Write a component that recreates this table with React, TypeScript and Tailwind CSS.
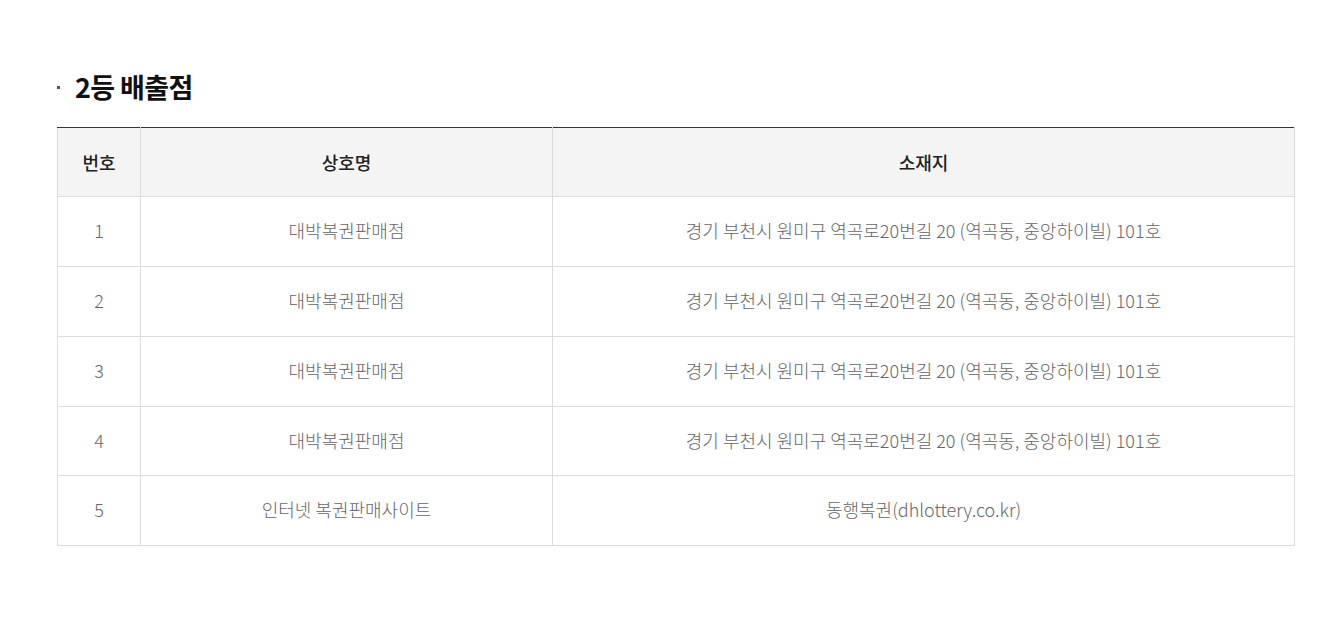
import React from "react";

const rows = [
  { n: "1", name: "대박복권판매점", addr: "경기 부천시 원미구 역곡로20번길 20 (역곡동, 중앙하이빌) 101호" },
  { n: "2", name: "대박복권판매점", addr: "경기 부천시 원미구 역곡로20번길 20 (역곡동, 중앙하이빌) 101호" },
  { n: "3", name: "대박복권판매점", addr: "경기 부천시 원미구 역곡로20번길 20 (역곡동, 중앙하이빌) 101호" },
  { n: "4", name: "대박복권판매점", addr: "경기 부천시 원미구 역곡로20번길 20 (역곡동, 중앙하이빌) 101호" },
  { n: "5", name: "인터넷 복권판매사이트", addr: "동행복권(dhlottery.co.kr)" },
];

export default function App() {
  return (
    <div
      className="w-[1336px] h-[621px] bg-white pt-[67px] pl-[57px]"
      style={{ fontFamily: '"Noto Sans CJK KR", "Noto Sans", sans-serif' }}
    >
      <div className="flex items-center h-[38px]">
        <span className="w-[3px] h-[3px] bg-[#555] mr-[15px] mt-[2px]" />
        <h2 className="text-[27px] font-bold text-[#111] tracking-[-0.6px] leading-none">2등 배출점</h2>
      </div>
      <table className="mt-[22px] w-[1238px] border-collapse text-[18px]">
        <colgroup>
          <col className="w-[83px]" />
          <col className="w-[412px]" />
          <col />
        </colgroup>
        <thead>
          <tr className="h-[69px] bg-[#f4f4f4]">
            <th className="border border-[#dcdcdc] border-t-[#333] font-medium text-[#222]">번호</th>
            <th className="border border-[#dcdcdc] border-t-[#333] font-medium text-[#222]">상호명</th>
            <th className="border border-[#dcdcdc] border-t-[#333] font-medium text-[#222]">소재지</th>
          </tr>
        </thead>
        <tbody>
          {rows.map((r, i) => (
            <tr key={r.n} className={i === 3 ? "h-[69px]" : "h-[70px]"}>
              <td className="border border-[#dcdcdc] text-center text-[#666] font-light pb-[2px]">{r.n}</td>
              <td className="border border-[#dcdcdc] text-center text-[#666] font-light pb-[2px]">{r.name}</td>
              <td className="border border-[#dcdcdc] text-center text-[#666] font-light pb-[2px]">{r.addr}</td>
            </tr>
          ))}
        </tbody>
      </table>
    </div>
  );
}
